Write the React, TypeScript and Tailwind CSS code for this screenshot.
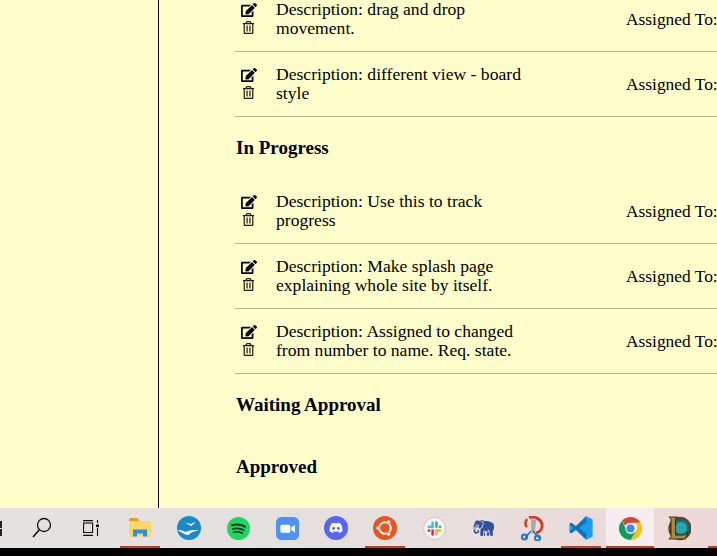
import React from "react";
import { FaEdit, FaRegTrashAlt } from "react-icons/fa";
import { GiElephant } from "react-icons/gi";

interface Task {
  text: string;
}

const todo: Task[] = [
  { text: "Description: drag and drop movement." },
  { text: "Description: different view - board style" },
];

const inProgress: Task[] = [
  { text: "Description: Use this to track progress" },
  { text: "Description: Make splash page explaining whole site by itself." },
  { text: "Description: Assigned to changed from number to name. Req. state." },
];

const TaskRow: React.FC<{ task: Task }> = ({ task }) => (
  <div className="flex h-[65px] items-center border-b border-[#b5b593]">
    <div className="flex w-[27px] shrink-0 flex-col items-center gap-[3px] pb-[2px]">
      <FaEdit size={16} className="text-black" />
      <FaRegTrashAlt size={13} className="text-[#241a10]" />
    </div>
    <div className="ml-[14px] w-[250px] shrink-0 leading-[19.5px]">{task.text}</div>
    <div className="ml-[100px] whitespace-nowrap text-[17.4px]">Assigned To:</div>
  </div>
);

const Heading: React.FC<{ title: string }> = ({ title }) => (
  <h3 className="flex h-[62px] items-center pl-[1px] text-[19px] font-bold">{title}</h3>
);

const Search = () => (
  <svg width="24" height="24" viewBox="0 0 24 24" fill="none" stroke="#111" strokeWidth="1.3">
    <circle cx="14" cy="9" r="6.5" />
    <path d="M9.3 13.8 L3 21" strokeWidth="1.6" />
  </svg>
);

const TaskView = () => (
  <svg width="16" height="16" viewBox="0 0 16 16" fill="none" stroke="#111" strokeWidth="1.1">
    <path d="M0 .6h10M0 15.4h10" />
    <rect x="0.6" y="3" width="9" height="9.5" />
    <path d="M14.5 0v3M14.5 8v8" />
    <rect x="13" y="4.5" width="3" height="2.6" fill="#111" stroke="none" />
  </svg>
);

const Explorer = () => (
  <svg width="22" height="20" viewBox="0 0 22 20">
    <path d="M0 1.5A1.5 1.5 0 0 1 1.5 0h7l2 3H0z" fill="#e0a31c" />
    <rect x="0" y="3" width="22" height="15.5" rx="1" fill="#fbd568" />
    <path d="M4 18.5v-7h14v7h-4v-3H8v3z" fill="#2f8fd8" />
  </svg>
);

const Gull = () => (
  <svg width="24" height="24" viewBox="0 0 24 24">
    <circle cx="12" cy="12" r="12" fill="#1b8acb" />
    <path d="M9 7c2 .6 3.5 .6 4.5 1.2 1.2-1 3-1.6 5-1.6-1.6 .8-3 2-3.6 3.2-1.6 .2-3-1-5.9-2.8z" fill="#fff" />
    <path d="M0.5 14.5c3-.6 6 .2 8 1.6 3-1.4 7-2.4 13-1.8-4 .8-8 2.4-10 4.6-3.4 .2-7-3-11-4.4z" fill="#fff" />
  </svg>
);

const Spotify = () => (
  <svg width="23" height="23" viewBox="0 0 24 24" fill="none" stroke="#14331f" strokeLinecap="round">
    <circle cx="12" cy="12" r="12" fill="#1ed760" stroke="none" />
    <path d="M5.2 8.6c4.4-1.2 9.6-.8 13.6 1.4" strokeWidth="2.2" />
    <path d="M6 12.4c3.8-1 8-.6 11.4 1.2" strokeWidth="1.9" />
    <path d="M6.8 15.9c3.2-.8 6.6-.4 9.4 1" strokeWidth="1.6" />
  </svg>
);

const Zoom = () => (
  <svg width="23" height="23" viewBox="0 0 24 24">
    <rect width="24" height="24" rx="5.5" fill="#4f92f7" />
    <rect x="4.5" y="8" width="10.5" height="8.5" rx="2" fill="#fff" />
    <path d="M16 11l3.8-2.8v8.2L16 13.6z" fill="#fff" />
  </svg>
);

const Discord = () => (
  <svg width="24" height="24" viewBox="0 0 24 24">
    <circle cx="12" cy="12" r="12" fill="#5865f2" />
    <path d="M7.6 7.6c1.2-.6 2.2-.8 2.9-.9l.3.7c.8-.1 1.6-.1 2.4 0l.3-.7c.7.1 1.7.3 2.9.9 1.6 2.4 2.3 5 2.1 7.7-1.2.9-2.3 1.4-3.4 1.7l-.8-1.2.9-.5-.2-.2c-2.3 1-3.7 1-6 0l-.2.2.9.5-.8 1.2c-1.1-.3-2.2-.8-3.4-1.7-.2-2.7.5-5.3 2.1-7.7z" fill="#fff" />
    <ellipse cx="9.6" cy="12.3" rx="1.4" ry="1.6" fill="#5865f2" />
    <ellipse cx="14.4" cy="12.3" rx="1.4" ry="1.6" fill="#5865f2" />
  </svg>
);

const Ubuntu = () => (
  <svg width="24" height="24" viewBox="0 0 24 24">
    <circle cx="12" cy="12" r="12" fill="#e95420" />
    <circle cx="12" cy="12" r="5.8" fill="none" stroke="#fff" strokeWidth="2" />
    <circle cx="5" cy="12" r="2" fill="#fff" stroke="#e95420" strokeWidth="0.6" />
    <circle cx="15.6" cy="5.9" r="2" fill="#fff" stroke="#e95420" strokeWidth="0.6" />
    <circle cx="15.6" cy="18.1" r="2" fill="#fff" stroke="#e95420" strokeWidth="0.6" />
  </svg>
);

const Slack = () => (
  <svg width="23" height="23" viewBox="0 0 24 24" fill="none" strokeWidth="2.6" strokeLinecap="round">
    <circle cx="12" cy="12" r="11.5" fill="#f4f3f2" stroke="#c9c7c6" strokeWidth="1" />
    <path d="M10 6v4.2H6" stroke="#36c5f0" />
    <path d="M14 5.8v4.4M18 10.2h-.4" stroke="#2eb67d" />
    <path d="M14 18v-3.8h4" stroke="#ecb22e" />
    <path d="M10 18.2v-4M6 14.2h.4" stroke="#e01e5a" />
  </svg>
);

const Elephant = () => (
  <div className="flex h-[23px] w-[23px] items-center justify-center rounded-full bg-[#e6e3e2]">
    <GiElephant size={24} className="-scale-x-100 text-[#33519f]" />
  </div>
);

const Snip = () => (
  <svg width="24" height="25" viewBox="0 0 24 25" fill="none">
    <path d="M9 1.5c6-1.5 12 1.5 13 7 .6 4-2 7.5-6 8.5" stroke="#d4401f" strokeWidth="3" />
    <path d="M7 3c-2 3-2 6 0 8" stroke="#d4401f" strokeWidth="2.5" />
    <path d="M11 3l5 1-1 12-3 2-1-5z" fill="#a9a9a9" />
    <path d="M5 22l6-7M19 22l-6-7" stroke="#1f78c8" strokeWidth="1.6" />
    <circle cx="4.5" cy="21" r="2.6" stroke="#1f78c8" strokeWidth="2" />
    <circle cx="17.5" cy="22" r="2.6" stroke="#1f78c8" strokeWidth="2" />
  </svg>
);

const VsCode = () => (
  <svg width="24" height="24" viewBox="0 0 24 24">
    <path d="M17.2 0.3L23.6 3.2V20.8L17.2 23.7L6.8 13.8L2.4 17.2L0.4 16.1V7.9L2.4 6.8L6.8 10.2z" fill="#1f9cf0" />
    <path d="M17.2 0.3V6.5L10 12l7.2 5.5v6.2L6.8 13.8 2.4 17.2.4 16.1 4.4 12 .4 7.9 2.4 6.8l4.4 3.4z" fill="#0a72b8" />
  </svg>
);

const Chrome = () => (
  <svg width="23" height="23" viewBox="0 0 24 24">
    <path d="M12 0a12 12 0 0 1 10.4 6H12a6 6 0 0 0-5.4 3.4L3.2 3.9A12 12 0 0 1 12 0z" fill="#db4437" />
    <path d="M22.4 6A12 12 0 0 1 12 24l5.2-9a6 6 0 0 0-.1-9z" fill="#f4c20d" />
    <path d="M12 24A12 12 0 0 1 3.2 3.9L8.4 15a6 6 0 0 0 8.8 0z" fill="#0f9d58" />
    <circle cx="12" cy="12" r="5.4" fill="#fff" />
    <circle cx="12" cy="12" r="4.3" fill="#4285f4" />
  </svg>
);

const League = () => (
  <svg width="24" height="25" viewBox="0 0 24 25">
    <circle cx="13" cy="12.5" r="10.5" fill="#0d6f7d" stroke="#5d4a22" strokeWidth="2.4" />
    <circle cx="14" cy="12" r="6" fill="#2ba5ad" />
    <path d="M2 1h8.5L8.5 3v16h9l3-3-2 7H2l2-2.5V3z" fill="#b08a35" stroke="#2e230c" strokeWidth="0.9" />
  </svg>
);

const taskbarItems: { key: string; icon: React.ReactNode; running?: boolean; active?: boolean }[] = [
  { key: "search", icon: <Search /> },
  { key: "taskview", icon: <TaskView /> },
  { key: "explorer", icon: <Explorer />, running: true },
  { key: "gull", icon: <Gull /> },
  { key: "spotify", icon: <Spotify /> },
  { key: "zoom", icon: <Zoom /> },
  { key: "discord", icon: <Discord /> },
  { key: "ubuntu", icon: <Ubuntu />, running: true },
  { key: "slack", icon: <Slack /> },
  { key: "elephant", icon: <Elephant /> },
  { key: "snip", icon: <Snip /> },
  { key: "vscode", icon: <VsCode />, running: true },
  { key: "chrome", icon: <Chrome />, running: true, active: true },
  { key: "league", icon: <League /> },
  { key: "next", icon: null, running: true },
];

export default function App() {
  return (
    <div className="flex h-[556px] w-[717px] flex-col overflow-hidden bg-black font-['Liberation_Serif',serif] text-[17.6px] text-black">
      <div className="flex h-[508px] shrink-0 overflow-hidden bg-[#ffffcc]">
        <div className="w-[159px] shrink-0 border-r border-black" />
        <div className="ml-[76px] -mt-[13px] w-[482px] shrink-0">
          {todo.map((t) => (
            <TaskRow key={t.text} task={t} />
          ))}
          <Heading title="In Progress" />
          {inProgress.map((t) => (
            <TaskRow key={t.text} task={t} />
          ))}
          <Heading title="Waiting Approval" />
          <Heading title="Approved" />
        </div>
      </div>

      <div className="flex h-[40px] shrink-0 bg-gradient-to-r from-[#e4e2e1] via-[#e5e0de] to-[#eed9d8]">
        <div className="flex w-[18px] shrink-0 flex-col justify-center gap-[1px]">
          <div className="h-[7px] w-[2px] bg-[#222]" />
          <div className="h-[7px] w-[2px] bg-[#222]" />
        </div>
        <div className="flex shrink-0 gap-[1px]">
          {taskbarItems.map((item) => (
            <div
              key={item.key}
              className={`relative flex h-[40px] w-[48px] shrink-0 items-center justify-center ${
                item.active ? "bg-[#f6edee]" : ""
              }`}
            >
              {item.icon}
              {item.running && (
                <div
                  className={`absolute bottom-0 h-[2px] bg-[#c93a26] ${
                    item.active ? "left-0 right-0" : "left-[4px] right-[4px]"
                  }`}
                />
              )}
            </div>
          ))}
        </div>
      </div>
    </div>
  );
}
